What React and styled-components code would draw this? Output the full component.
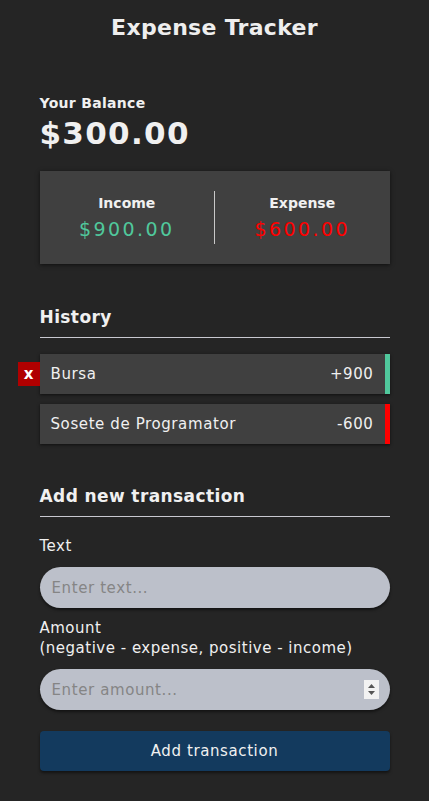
import React from "react";
import styled, { createGlobalStyle } from "styled-components";

const GlobalStyle = createGlobalStyle`
  html, body {
    margin: 0;
    padding: 0;
    background: #252525;
  }
  body {
    font-family: "DejaVu Sans", "Liberation Sans", sans-serif;
    color: #f0f0f0;
  }
  * { box-sizing: border-box; }
`;

const colors = {
  panel: "#404040",
  green: "#50c89c",
  red: "#ff0000",
  line: "#c8c8d0",
  input: "#bcc0ca",
  button: "#133a5e",
};

const Page = styled.div`
  width: 350px;
  margin: 0 auto;
  padding: 14px 0 30px;
`;

const Title = styled.h1`
  margin: 0;
  text-align: center;
  font-size: 22px;
  font-weight: bold;
  line-height: 28px;
  letter-spacing: 0.3px;
  color: #eeeeee;
`;

const BalanceLabel = styled.h4`
  margin: 52px 0 0;
  font-size: 14px;
  font-weight: bold;
  line-height: 18px;
  letter-spacing: 0.3px;
`;

const Balance = styled.h2`
  margin: 2px 0 0;
  font-size: 31px;
  font-weight: bold;
  line-height: 38px;
  letter-spacing: 1.3px;
`;

const Summary = styled.div`
  display: flex;
  align-items: center;
  margin-top: 19px;
  height: 93px;
  padding: 20px 0;
  background: ${colors.panel};
  box-shadow: 0 1px 4px rgba(0, 0, 0, 0.6);
`;

const SummaryCol = styled.div`
  flex: 1;
  text-align: center;
  align-self: stretch;
  display: flex;
  flex-direction: column;
  justify-content: center;
  & + & {
    border-left: 1px solid #c8c8c8;
  }
`;

const SummaryLabel = styled.div`
  font-size: 14px;
  font-weight: bold;
  line-height: 20px;
`;

const Money = styled.div`
  margin-top: 3px;
  font-size: 19px;
  line-height: 26px;
  letter-spacing: 2.4px;
  color: ${(p) => (p.$minus ? colors.red : colors.green)};
`;

const SectionTitle = styled.h3`
  margin: ${(p) => p.$top}px 0 0;
  padding-bottom: 9px;
  border-bottom: 1px solid ${colors.line};
  font-size: 17px;
  font-weight: bold;
  line-height: 22px;
  letter-spacing: 0.4px;
`;

const List = styled.ul`
  list-style: none;
  margin: 16px 0 0;
  padding: 0;
  display: flex;
  flex-direction: column;
  gap: 10px;
`;

const Item = styled.li`
  position: relative;
  display: flex;
  align-items: center;
  justify-content: space-between;
  height: 40px;
  padding: 0 11px 0 11px;
  background: ${colors.panel};
  border-right: 5px solid ${(p) => (p.$minus ? colors.red : colors.green)};
  box-shadow: 0 1px 3px rgba(0, 0, 0, 0.6);
  font-size: 15px;
  letter-spacing: 0.6px;
`;

const DeleteBtn = styled.button`
  position: absolute;
  left: -22px;
  top: 8px;
  width: 22px;
  height: 24px;
  border: 0;
  padding: 0;
  background: #b00000;
  color: #fff;
  font-family: inherit;
  font-size: 15px;
  font-weight: bold;
  line-height: 22px;
`;

const Form = styled.form`
  margin-top: 19px;
`;

const Label = styled.label`
  display: block;
  font-size: 15px;
  line-height: 20px;
  letter-spacing: 0.5px;
  margin-top: ${(p) => p.$top}px;
`;

const InputWrap = styled.div`
  position: relative;
  margin-top: 11px;
`;

const Input = styled.input`
  display: block;
  width: 100%;
  height: 41px;
  border: 0;
  border-radius: 21px;
  padding: 0 12px;
  background: ${colors.input};
  box-shadow: 0 2px 3px rgba(0, 0, 0, 0.5);
  font-family: inherit;
  font-size: 15px;
  letter-spacing: 0.6px;
  color: #333;
  outline: none;
  &::placeholder {
    color: #858585;
  }
  &::-webkit-inner-spin-button,
  &::-webkit-outer-spin-button {
    -webkit-appearance: none;
    margin: 0;
  }
  -moz-appearance: textfield;
`;

const Spinner = styled.span`
  position: absolute;
  right: 11px;
  top: 11px;
  width: 15px;
  height: 19px;
  background: #f2f2f2;
  display: flex;
  align-items: center;
  justify-content: center;
`;

const Button = styled.button`
  display: block;
  width: 100%;
  height: 40px;
  margin-top: 21px;
  border: 0;
  border-radius: 4px;
  background: ${colors.button};
  box-shadow: 0 2px 3px rgba(0, 0, 0, 0.5);
  color: #f0f0f0;
  font-family: inherit;
  font-size: 15px;
  letter-spacing: 0.6px;
`;

const transactions = [
  { id: 1, text: "Bursa", amount: 900 },
  { id: 2, text: "Sosete de Programator", amount: -600 },
];

export default function App() {
  return (
    <>
      <GlobalStyle />
      <Page>
        <Title>Expense Tracker</Title>
        <BalanceLabel>Your Balance</BalanceLabel>
        <Balance>$300.00</Balance>

        <Summary>
          <SummaryCol>
            <SummaryLabel>Income</SummaryLabel>
            <Money>$900.00</Money>
          </SummaryCol>
          <SummaryCol>
            <SummaryLabel>Expense</SummaryLabel>
            <Money $minus>$600.00</Money>
          </SummaryCol>
        </Summary>

        <SectionTitle $top={42}>History</SectionTitle>
        <List>
          {transactions.map((t, i) => (
            <Item key={t.id} $minus={t.amount < 0}>
              {i === 0 && <DeleteBtn>x</DeleteBtn>}
              <span>{t.text}</span>
              <span>
                {t.amount < 0 ? "-" : "+"}
                {Math.abs(t.amount)}
              </span>
            </Item>
          ))}
        </List>

        <SectionTitle $top={41}>Add new transaction</SectionTitle>
        <Form onSubmit={(e) => e.preventDefault()}>
          <Label $top={0}>Text</Label>
          <InputWrap>
            <Input type="text" placeholder="Enter text..." />
          </InputWrap>
          <Label $top={10}>
            Amount <br />
            (negative - expense, positive - income)
          </Label>
          <InputWrap>
            <Input type="number" placeholder="Enter amount..." />
            <Spinner>
              <svg width="9" height="15" viewBox="0 0 9 15">
                <path d="M4.5 2 L8 6 H1 Z" fill="#555" />
                <path d="M4.5 13 L8 9 H1 Z" fill="#555" />
              </svg>
            </Spinner>
          </InputWrap>
          <Button type="submit">Add transaction</Button>
        </Form>
      </Page>
    </>
  );
}
